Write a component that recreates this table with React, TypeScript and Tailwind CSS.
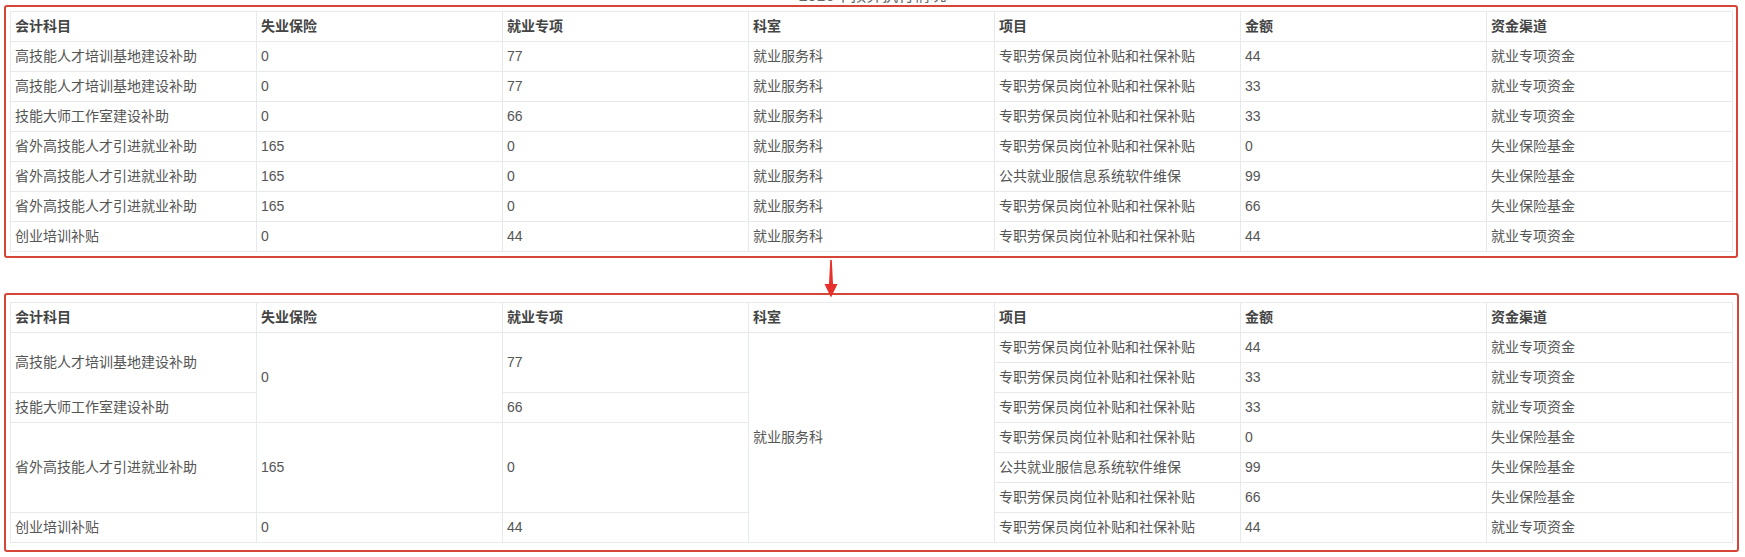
import React from "react";

const headers = ["会计科目", "失业保险", "就业专项", "科室", "项目", "金额", "资金渠道"];

const rows1 = [
  ["高技能人才培训基地建设补助", "0", "77", "就业服务科", "专职劳保员岗位补贴和社保补贴", "44", "就业专项资金"],
  ["高技能人才培训基地建设补助", "0", "77", "就业服务科", "专职劳保员岗位补贴和社保补贴", "33", "就业专项资金"],
  ["技能大师工作室建设补助", "0", "66", "就业服务科", "专职劳保员岗位补贴和社保补贴", "33", "就业专项资金"],
  ["省外高技能人才引进就业补助", "165", "0", "就业服务科", "专职劳保员岗位补贴和社保补贴", "0", "失业保险基金"],
  ["省外高技能人才引进就业补助", "165", "0", "就业服务科", "公共就业服信息系统软件维保", "99", "失业保险基金"],
  ["省外高技能人才引进就业补助", "165", "0", "就业服务科", "专职劳保员岗位补贴和社保补贴", "66", "失业保险基金"],
  ["创业培训补贴", "0", "44", "就业服务科", "专职劳保员岗位补贴和社保补贴", "44", "就业专项资金"],
];

const td = "border border-[#e7e9ec] pl-[4px] pr-[4px] pt-[4px] pb-[5px] leading-[20px] align-middle text-[#555] font-normal text-left";
const th = "border border-[#e7e9ec] pl-[4px] pr-[4px] pt-[4px] pb-[5px] leading-[20px] align-middle text-[#444] font-bold text-left";

function Cols() {
  return (
    <colgroup>
      {headers.map((h) => (
        <col key={h} className="w-[246px]" />
      ))}
    </colgroup>
  );
}

function Head() {
  return (
    <thead>
      <tr>
        {headers.map((h) => (
          <th key={h} className={th}>
            {h}
          </th>
        ))}
      </tr>
    </thead>
  );
}

export default function App() {
  const font = { fontFamily: '"Liberation Sans", "Noto Sans CJK SC", sans-serif' };
  return (
    <div className="relative w-[1745px] h-[557px] bg-white overflow-hidden text-[14px]" style={font}>
      <div className="h-[5px] flex justify-center items-end">
        <span className="block leading-[20px] text-[16px] text-[#666] mb-[-1px] whitespace-nowrap">2016年预算执行情况</span>
      </div>

      <div className="ml-[4px] w-[1734px] border-2 border-[#d64536] rounded-[3px] pt-[4px] pb-[4px] pl-[4px]">
        <table className="table-fixed border-collapse w-[1722px]">
          <Cols />
          <Head />
          <tbody>
            {rows1.map((r, i) => (
              <tr key={i}>
                {r.map((c, j) => (
                  <td key={j} className={td}>
                    {c}
                  </td>
                ))}
              </tr>
            ))}
          </tbody>
        </table>
      </div>

      <div className="h-[35px]" />

      <div className="ml-[4px] w-[1735px] border-2 border-[#d64536] rounded-[3px] pt-[7px] pb-[7px] pl-[4px]">
        <table className="table-fixed border-collapse w-[1722px]">
          <Cols />
          <Head />
          <tbody>
            <tr>
              <td rowSpan={2} className={td}>高技能人才培训基地建设补助</td>
              <td rowSpan={3} className={td}>0</td>
              <td rowSpan={2} className={td}>77</td>
              <td rowSpan={7} className={td}>就业服务科</td>
              <td className={td}>专职劳保员岗位补贴和社保补贴</td>
              <td className={td}>44</td>
              <td className={td}>就业专项资金</td>
            </tr>
            <tr>
              <td className={td}>专职劳保员岗位补贴和社保补贴</td>
              <td className={td}>33</td>
              <td className={td}>就业专项资金</td>
            </tr>
            <tr>
              <td className={td}>技能大师工作室建设补助</td>
              <td className={td}>66</td>
              <td className={td}>专职劳保员岗位补贴和社保补贴</td>
              <td className={td}>33</td>
              <td className={td}>就业专项资金</td>
            </tr>
            <tr>
              <td rowSpan={3} className={td}>省外高技能人才引进就业补助</td>
              <td rowSpan={3} className={td}>165</td>
              <td rowSpan={3} className={td}>0</td>
              <td className={td}>专职劳保员岗位补贴和社保补贴</td>
              <td className={td}>0</td>
              <td className={td}>失业保险基金</td>
            </tr>
            <tr>
              <td className={td}>公共就业服信息系统软件维保</td>
              <td className={td}>99</td>
              <td className={td}>失业保险基金</td>
            </tr>
            <tr>
              <td className={td}>专职劳保员岗位补贴和社保补贴</td>
              <td className={td}>66</td>
              <td className={td}>失业保险基金</td>
            </tr>
            <tr>
              <td className={td}>创业培训补贴</td>
              <td className={td}>0</td>
              <td className={td}>44</td>
              <td className={td}>专职劳保员岗位补贴和社保补贴</td>
              <td className={td}>44</td>
              <td className={td}>就业专项资金</td>
            </tr>
          </tbody>
        </table>
      </div>

      <svg className="absolute left-[823px] top-[260px]" width="16" height="38" viewBox="0 0 16 38">
        <polygon points="7.2,0 8.8,0 10,24 14.5,24 8,37.5 1.5,24 6,24" fill="#e8302a" />
      </svg>
    </div>
  );
}
